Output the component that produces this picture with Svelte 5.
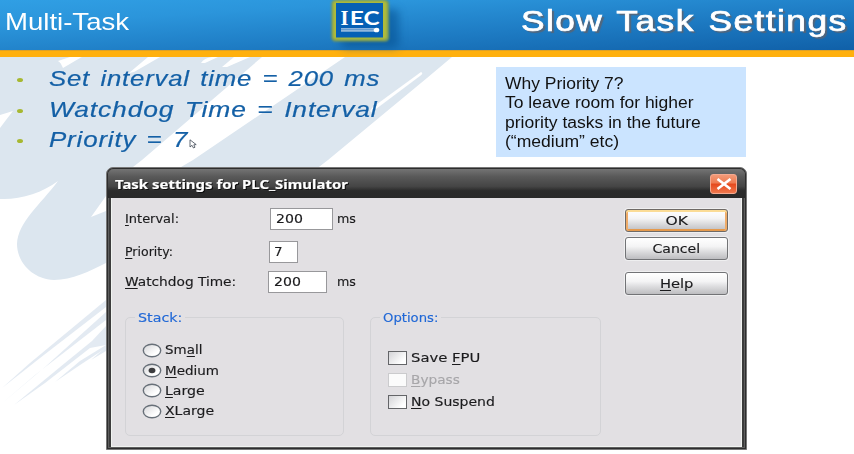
<script>
  const fit = (node, width) => {
    node.style.transform = `scaleX(${width / node.offsetWidth})`;
  };

  const points = [
    { text: 'Set interval time = 200 ms', width: 331 },
    { text: 'Watchdog Time = Interval', width: 328 },
    { text: 'Priority = 7', width: 139 },
  ];
  const note = [
    { text: 'Why Priority 7?', width: 118 },
    { text: 'To leave room for higher', width: 189 },
    { text: 'priority tasks in the future', width: 196 },
    { text: '(“medium” etc)', width: 114 },
  ];
  const fields = [
    { key: 'I', rest: 'nterval:', width: 54, value: '200', vw: 27, box: 63, pad: 5, shift: 0, unit: true },
    { key: 'P', rest: 'riority:', width: 48, value: '7', vw: 9, box: 29, pad: 4, shift: -1, unit: false },
    { key: 'W', rest: 'atchdog Time:', width: 111, value: '200', vw: 27, box: 59, pad: 5, shift: -2, unit: true },
  ];
  const stack = [
    { pre: 'Sm', key: 'a', post: 'll', width: 37 },
    { pre: '', key: 'M', post: 'edium', width: 54, on: true },
    { pre: '', key: 'L', post: 'arge', width: 40 },
    { pre: '', key: 'X', post: 'Large', width: 49 },
  ];
  const options = [
    { pre: 'Save ', key: 'F', post: 'PU', width: 69 },
    { pre: '', key: 'B', post: 'ypass', width: 49, off: true },
    { pre: '', key: 'N', post: 'o Suspend', width: 84 },
  ];
</script>

<div class="slide">
  <svg class="art" width="854" height="454" viewBox="0 0 854 454">
    <path fill="#dce6ef" d="M0 57H452L427 78L328 160L250 220L160 240L106 263C90 271 72 280 54 280C32 279 17 262 17 244C18 222 40 205 58 181C42 193 20 200 0 199Z" />
    <g fill="#fff">
      <path d="M262 57H345L193 160L106 211L91 217L106 196L124 174L142 160Z" />
      <path d="M0 115L13 111L6 120L0 128Z" />
      <path d="M58 61L70 57H82L63 65Z" />
      <path d="M60 62Q70 58 80 58L63 68Z" />
      <path d="M129 73L148 57H160L134 72Z" />
      <path d="M201 63Q204 58 212 57H218L205 63Z" />
      <path d="M222 67L234 57H250L227 67Z" />
      <path d="M421 72Q424 73 420 76L372 112Q368 112 373 107Z" />
    </g>
    <g fill="#e3eaf2">
      <path d="M2 388L30 363L106 300V307L40 358Z" />
      <path d="M0 405L45 367L106 312V320L35 375Z" />
      <path d="M14 405L65 363L92 341L106 326V345L90 348L45 383Z" />
      <path d="M55 382L80 361L106 345V348L80 365Z" />
      <path d="M91 360L106 347V351Z" />
    </g>
  </svg>

  <header>
    <div class="topic"><span class="t" use:fit={124}>Multi-Task</span></div>
    <svg class="logo" width="84" height="57" viewBox="0 0 84 57">
      <defs>
        <filter id="soft" x="-30%" y="-30%" width="160%" height="170%"><feGaussianBlur stdDeviation="4" /></filter>
        <filter id="edge"><feGaussianBlur stdDeviation="0.8" /></filter>
      </defs>
      <rect x="16" y="9" width="58" height="39" rx="5" fill="#064a88" opacity=".5" filter="url(#soft)" />
      <rect x="6.5" y="0" width="57.5" height="41.5" rx="4" fill="#789a58" filter="url(#edge)" />
      <rect x="8" y="1" width="54" height="38.5" rx="3" fill="#aebb3a" filter="url(#edge)" />
      <rect x="11" y="3" width="47" height="34.5" fill="#0560b5" />
      <text x="15.5" y="24.7" class="iec" font-family="Liberation Serif, serif" font-size="21.5" textLength="8" lengthAdjust="spacingAndGlyphs">I</text>
      <text x="24.8" y="24.7" class="iec" font-family="Lato, sans-serif" font-size="19.8" textLength="29.8" lengthAdjust="spacingAndGlyphs">EC</text>
      <rect x="16" y="28.3" width="33" height="1.2" fill="#c5d8ec" />
      <rect x="16" y="30.2" width="34" height="1.4" fill="#b5cde5" />
      <ellipse cx="51.5" cy="30" rx="2.8" ry="2.3" fill="#fff" />
    </svg>
    <h1><span class="t" use:fit={326}>Slow Task Settings</span></h1>
  </header>
  <div class="stripe"></div>

  <section class="top">
    <ul>
      {#each points as p}
        <li><i class="dot"></i><span class="t" use:fit={p.width}>{p.text}</span></li>
      {/each}
    </ul>
    <svg class="pointer" width="8" height="10" viewBox="0 0 8 10"><path d="M1 .8V8L3 6.3L4.5 9L6 8.2L4.8 5.8L7.2 5.6Z" fill="#fff" stroke="#3d4653" stroke-width=".8" /></svg>
    <aside>
      {#each note as line}
        <div><span class="t" use:fit={line.width}>{line.text}</span></div>
      {/each}
    </aside>
  </section>

  <section class="dialog">
    <div class="bar">
      <div class="caption"><span class="t" use:fit={233}>Task settings for PLC_Simulator</span></div>
      <div class="close">
        <svg width="16" height="12" viewBox="0 0 16 12"><path d="M1.5 1L14.5 11M14.5 1L1.5 11" stroke="#fff" stroke-width="2.6" /></svg>
      </div>
    </div>
    <div class="body">
      <div class="upper">
        <div class="form">
          {#each fields as f, i}
            <div class="row r{i}">
              <div class="label"><span class="t" use:fit={f.width}><u>{f.key}</u>{f.rest}</span></div>
              <div class="slot">
                <div class="box" style="width:{f.box}px;margin-left:{f.shift}px;padding-left:{f.pad}px">
                  <span class="t" use:fit={f.vw}>{f.value}</span>
                </div>
              </div>
              {#if f.unit}<span class="t" use:fit={19}>ms</span>{/if}
            </div>
          {/each}
        </div>
        <div class="buttons">
          <div class="btn ok"><span class="t c" use:fit={22}>OK</span></div>
          <div class="btn cancel"><span class="t c" use:fit={48}>Cancel</span></div>
          <div class="btn help"><span class="t c" use:fit={33}><u>H</u>elp</span></div>
        </div>
      </div>
      <div class="groups">
        <div class="group stack">
          <div class="legend lg1"><span class="t" use:fit={44}>Stack:</span></div>
          {#each stack as s}
            <div class="opt">
              <svg width="20" height="15" viewBox="0 0 20 15">
                <defs><linearGradient id="rg" x2="1" y2="1"><stop offset="0" stop-color="#d5d5d8" /><stop offset=".7" stop-color="#fff" /></linearGradient></defs>
                <ellipse cx="10" cy="7.5" rx="8.7" ry="6.3" fill="url(#rg)" stroke="#687079" stroke-width="1.4" />
                {#if s.on}<ellipse cx="10" cy="7.5" rx="3.4" ry="2.7" fill="#3c3c3e" />{/if}
              </svg>
              <span class="t" use:fit={s.width}>{s.pre}<u>{s.key}</u>{s.post}</span>
            </div>
          {/each}
        </div>
        <div class="group opts">
          <div class="legend lg2"><span class="t" use:fit={55}>Options:</span></div>
          {#each options as o}
            <div class="opt" class:off={o.off}>
              <i class="check"></i>
              <span class="t" use:fit={o.width}>{o.pre}<u>{o.key}</u>{o.post}</span>
            </div>
          {/each}
        </div>
      </div>
    </div>
  </section>
</div>

<style>
  :global(body) { margin: 0; background: #fff; }
  * { box-sizing: border-box; }
  .slide { position: relative; width: 854px; height: 454px; overflow: hidden; background: #fff; font-family: "Liberation Sans", Arial, sans-serif; }
  .art { position: absolute; left: 0; top: 0; }
  header, .stripe, .top, .dialog { position: relative; }
  .t { display: inline-block; flex: none; white-space: pre; transform-origin: 0 50%; }
  .t.c { transform-origin: 50% 50%; }

  header { display: flex; height: 50px; background: linear-gradient(176.5deg, #309fe4 0%, #2b95db 25%, #1e7cc4 60%, #1060a8 100%); z-index: 1; }
  .topic { width: 325px; padding-left: 5px; color: #fff; font-size: 24px; line-height: 28px; padding-top: 8px; }
  .logo { flex: none; z-index: 2; }
  .iec { fill: #fff; font-weight: 700; }
  h1 { margin: 0 0 0 112px; padding-top: 5px; color: #fff; font-size: 29px; font-weight: 400; line-height: 32px; letter-spacing: 1.2px; word-spacing: 2px; -webkit-text-stroke: .7px #fff; text-shadow: 2px 2px 1px rgba(90, 100, 115, .9); }
  .stripe { height: 7px; background: #ffb00e; border-top: 1px solid #dda127; }

  .top { display: flex; height: 110px; }
  ul { list-style: none; width: 496px; margin: 0; padding: 7px 0 0 17px; }
  li { display: flex; align-items: center; height: 30.6px; color: #1460a6; font-size: 22px; font-style: italic; line-height: 30px; letter-spacing: .7px; word-spacing: 2px; -webkit-text-stroke: .2px #1460a6; }
  .dot { width: 6px; height: 4px; margin: 2px 26px 0 0; border-radius: 50%; background: #a7b831; }
  .pointer { position: absolute; left: 189px; top: 82px; }
  aside { width: 250px; height: 90px; margin-top: 10px; padding: 7px 0 0 9px; background: #cbe4ff; color: #111; font-size: 16px; }
  aside div { height: 19.3px; line-height: 20px; }

  .dialog { width: 641px; height: 283px; margin-left: 106px; padding: 1px 4px 4px; border: 1px solid #777; border-radius: 7px 7px 0 0; background: #3c3c3c; box-shadow: inset 0 0 0 1px #2d2d2d, inset 0 0 0 2px #5e5e5e; font-family: "DejaVu Sans", Verdana, sans-serif; font-size: 12px; color: #1b1b1d; -webkit-text-stroke: .15px; }
  .bar { display: flex; justify-content: space-between; height: 29px; margin: 0 -3px; padding: 5px 8px 0 7px; border-radius: 6px 6px 0 0; background: linear-gradient(#747474, #5a5a5a 25%, #454545 60%, #2b2b2b 75%, #292929); }
  .caption { padding-top: 1px; color: #fff; font: 700 12.5px/20px "Noto Sans", sans-serif; text-shadow: 1px 1px 0 #111; }
  .close { display: flex; align-items: center; justify-content: center; width: 27px; height: 20px; border: 1px solid #f4aa91; border-radius: 3px; background: linear-gradient(#f39a78, #ee7a50 45%, #e5481c 50%, #f0784d); }
  .body { height: 249px; border: 1px solid #f0f3f0; border-top: 0; background: #e2e0e3; }
  .upper { display: flex; justify-content: space-between; height: 112px; }
  .form { padding: 10px 0 0 13px; }
  .row { display: flex; align-items: center; }
  .r0 { height: 22px; margin-bottom: 11px; }
  .r1 { height: 21px; margin-bottom: 9px; }
  .r2 { height: 22px; }
  .label { width: 145px; }
  .slot { width: 67px; }
  .box { height: 22px; border: 1.5px solid #98989b; background: #fff; line-height: 20px; }
  .buttons { width: 103px; margin: 11px 13px 0 0; }
  .btn { display: flex; align-items: center; justify-content: center; height: 23px; border: 1.5px solid #727376; border-radius: 3px; background: linear-gradient(#fff, #f4f4f5 40%, #dcdcde 65%, #bdbdc0); box-shadow: 0 0 0 1px #efeff0; }
  .ok { border-color: #6f6a66; box-shadow: 0 0 0 1px #efeff0, inset 0 2px 0 #fbdc96, inset 2px 0 0 #efac69, inset -2px 0 0 #efac69, inset 0 -2px 0 #e59a4d; }
  .cancel { margin-top: 5px; }
  .help { margin-top: 12px; }

  .groups { display: flex; gap: 26px; padding: 7px 0 0 13px; }
  .group { position: relative; height: 119px; border: 1px solid #d3d3d6; border-radius: 5px; }
  .stack { width: 219px; padding: 22px 0 0 16px; }
  .opts { width: 231px; padding: 29px 0 0 17px; }
  .legend { position: absolute; top: -8px; height: 16px; padding: 0 3px; background: #e2e0e3; color: #2168d6; line-height: 16px; }
  .lg1 { left: 9px; width: 50px; }
  .lg2 { left: 9px; width: 61px; }
  .opt { display: flex; align-items: center; height: 20.4px; }
  .opt svg { flex: none; margin-right: 3px; }
  .opts .opt { height: 22px; }
  .check { width: 19px; height: 14px; margin-right: 4px; border: 1.5px solid #646568; background: linear-gradient(135deg, #d4d4d7, #fff 80%); }
  .off { color: #a7a6a9; }
  .off .check { border-color: #cbcbcd; background: #fbfbfb; }
  u { text-underline-offset: 1.5px; text-decoration-thickness: 1px; }
</style>
